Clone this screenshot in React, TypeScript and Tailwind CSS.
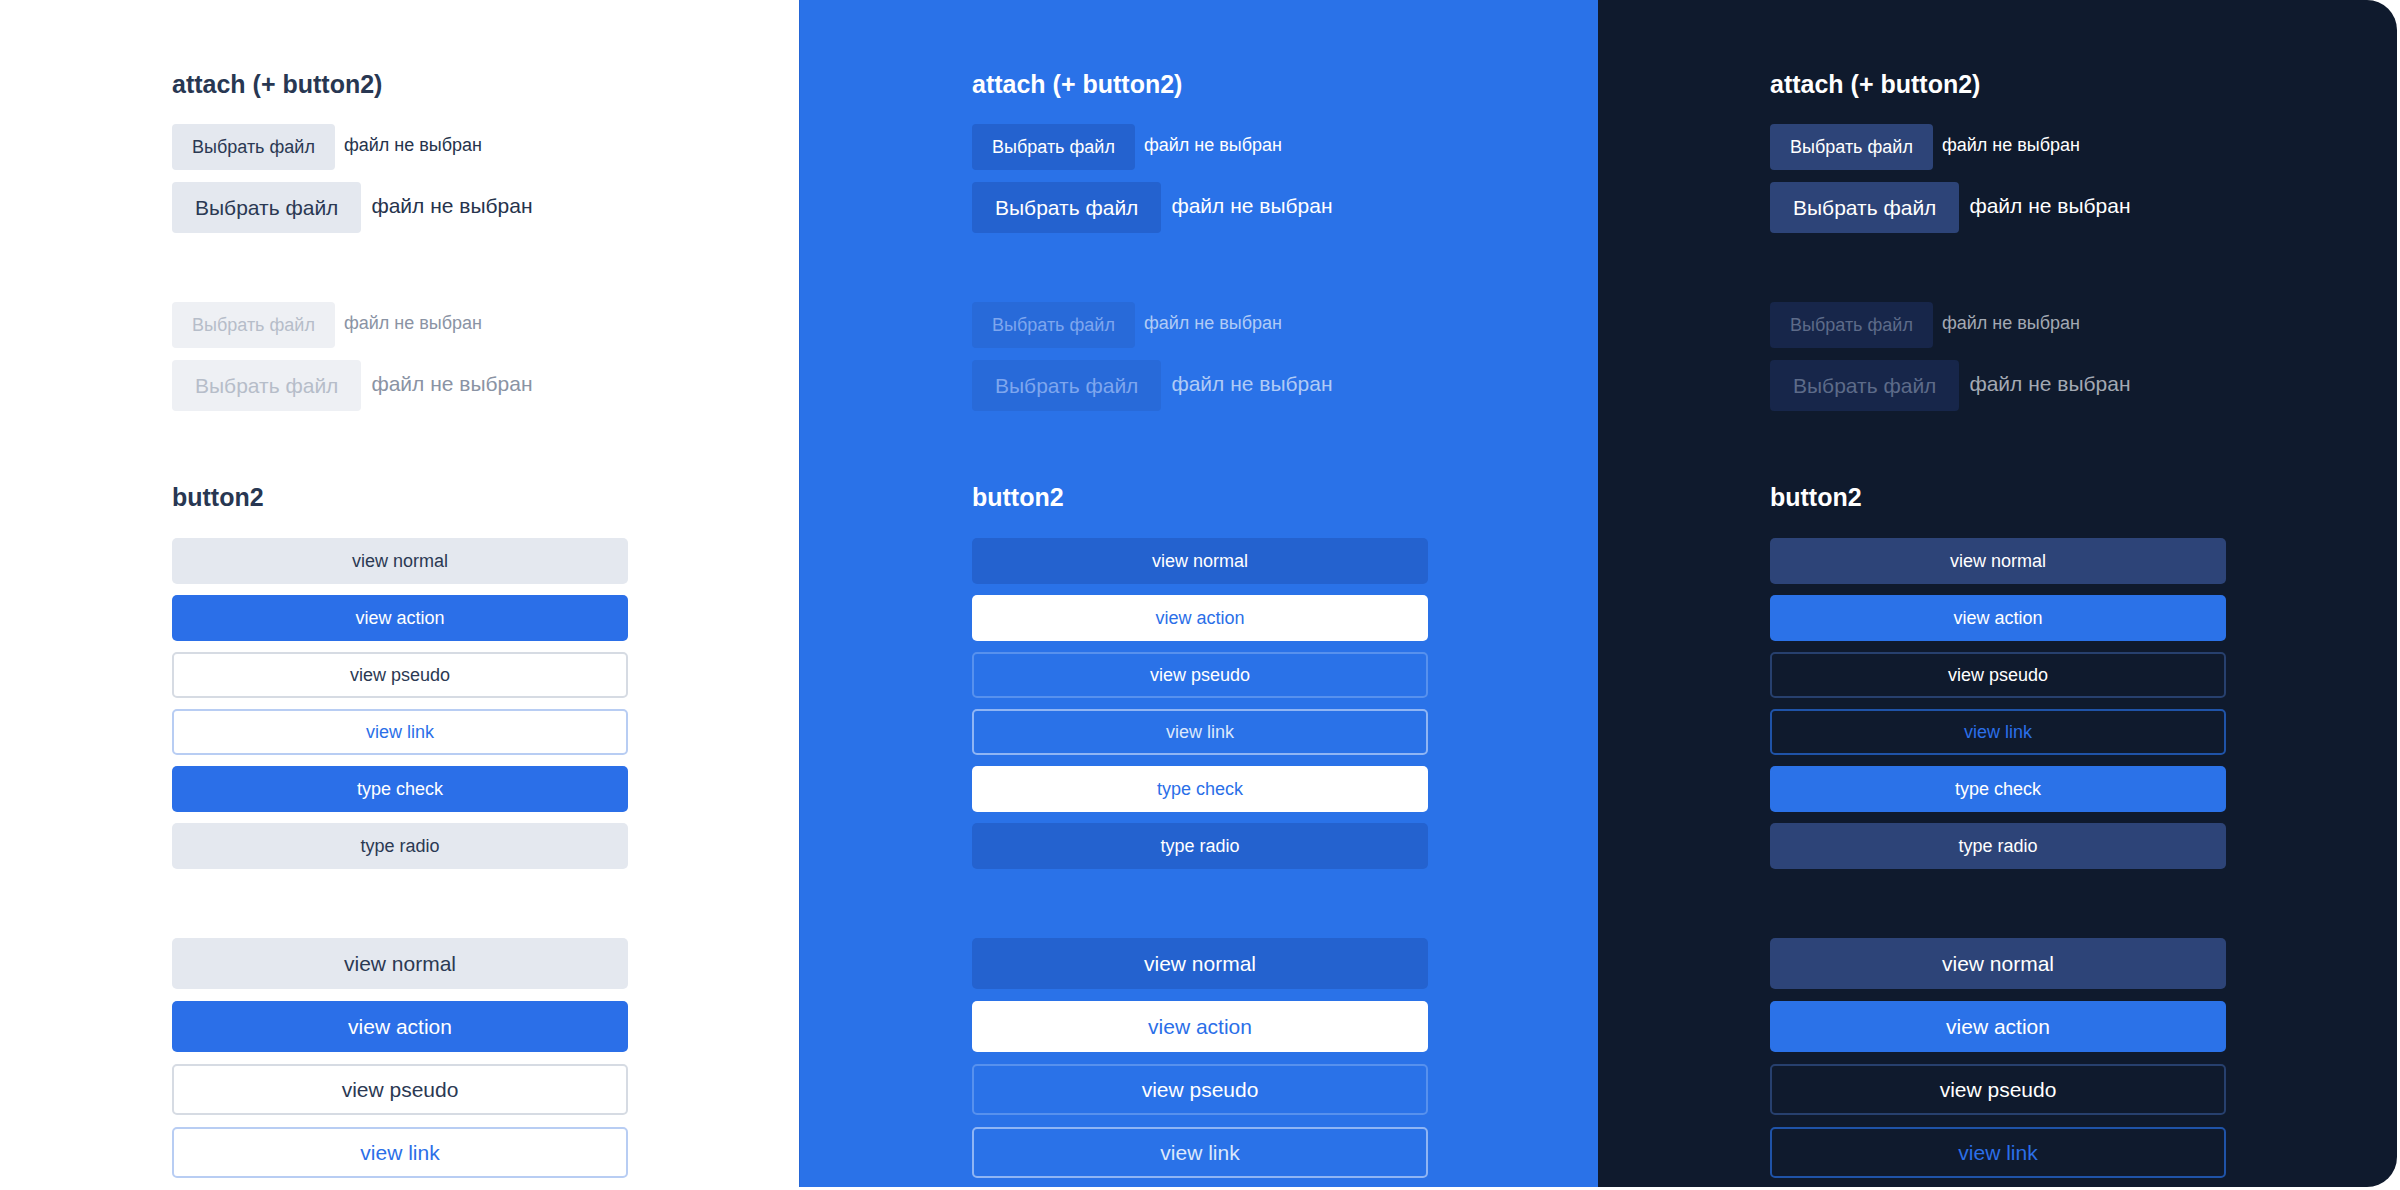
import React from "react";

type Theme = {
  panel: string;
  heading: string;
  fileBtn: string;
  label: string;
  fileBtnOff: string;
  labelOff: string;
  normal: string;
  action: string;
  pseudo: string;
  link: string;
  check: string;
  radio: string;
};

const themes: Theme[] = [
  {
    panel: "bg-white",
    heading: "text-[#283752]",
    fileBtn: "bg-[#e4e8ef] text-[#2b3953]",
    label: "text-[#26334c]",
    fileBtnOff: "bg-[#eef0f4] text-[#b6bdc9]",
    labelOff: "text-[#8a93a4]",
    normal: "bg-[#e4e8ef] text-[#2b3953]",
    action: "bg-[#2b6fe8] text-white",
    pseudo: "border-2 border-[#d6dbe3] bg-white text-[#2b3953]",
    link: "border-2 border-[#b8cdf3] bg-white text-[#2b6fe8]",
    check: "bg-[#2b6fe8] text-white",
    radio: "bg-[#e4e8ef] text-[#2b3953]",
  },
  {
    panel: "bg-[#2a72e8] border-l border-[#2566d6]",
    heading: "text-white",
    fileBtn: "bg-[#2462cf] text-white",
    label: "text-white",
    fileBtnOff: "bg-[#286ad9] text-[#7ea6ee]",
    labelOff: "text-[#b0cbf6]",
    normal: "bg-[#2462cf] text-white",
    action: "bg-white text-[#2b6fe8]",
    pseudo: "border-2 border-[#5791ee] text-white",
    link: "border-2 border-[#8fb5f4] text-[#dce8fc]",
    check: "bg-white text-[#2b6fe8]",
    radio: "bg-[#2462cf] text-white",
  },
  {
    panel: "bg-[#0f1a2d]",
    heading: "text-white",
    fileBtn: "bg-[#2d4478] text-white",
    label: "text-white",
    fileBtnOff: "bg-[#17264a] text-[#5d6b89]",
    labelOff: "text-[#a3a9b3]",
    normal: "bg-[#2d4478] text-white",
    action: "bg-[#2b72e8] text-white",
    pseudo: "border-2 border-[#27406e] text-white",
    link: "border-2 border-[#1f53a8] text-[#2b6fe8]",
    check: "bg-[#2b72e8] text-white",
    radio: "bg-[#2d4478] text-white",
  },
];

function AttachRow({ t, large, disabled }: { t: Theme; large?: boolean; disabled?: boolean }) {
  const btn = disabled ? t.fileBtnOff : t.fileBtn;
  const label = disabled ? t.labelOff : t.label;
  return (
    <div className={`flex items-center ${large ? "gap-[10px]" : "gap-[9px]"}`}>
      <div
        className={`flex items-center justify-center rounded-[4px] whitespace-nowrap ${btn} ${
          large ? "h-[51px] px-[23px] text-[21px]" : "h-[46px] px-[20px] text-[18px]"
        }`}
      >
        Выбрать файл
      </div>
      <span className={`mb-[4px] whitespace-nowrap ${label} ${large ? "text-[21px]" : "text-[18px]"}`}>
        файл не выбран
      </span>
    </div>
  );
}

function Btn({ cls, large, children }: { cls: string; large?: boolean; children: React.ReactNode }) {
  return (
    <div
      className={`flex w-[456px] shrink-0 items-center justify-center rounded-[5px] ${cls} ${
        large ? "h-[51px] text-[21px]" : "h-[46px] text-[18px]"
      }`}
    >
      {children}
    </div>
  );
}

function Column({ t }: { t: Theme }) {
  return (
    <div className={`flex h-full w-[800px] flex-col pl-[172px] pt-[70px] ${t.panel}`}>
      <h2 className={`text-[25px] font-bold leading-[29px] ${t.heading}`}>attach (+ button2)</h2>

      <div className="mt-[25px] flex flex-col gap-[12px]">
        <AttachRow t={t} />
        <AttachRow t={t} large />
      </div>

      <div className="mt-[69px] flex flex-col gap-[12px]">
        <AttachRow t={t} disabled />
        <AttachRow t={t} large disabled />
      </div>

      <h2 className={`mt-[72px] text-[25px] font-bold leading-[29px] ${t.heading}`}>button2</h2>

      <div className="mt-[26px] flex flex-col gap-[11px]">
        <Btn cls={t.normal}>view normal</Btn>
        <Btn cls={t.action}>view action</Btn>
        <Btn cls={t.pseudo}>view pseudo</Btn>
        <Btn cls={t.link}>view link</Btn>
        <Btn cls={t.check}>type check</Btn>
        <Btn cls={t.radio}>type radio</Btn>
      </div>

      <div className="mt-[69px] flex flex-col gap-[12px]">
        <Btn cls={t.normal} large>view normal</Btn>
        <Btn cls={t.action} large>view action</Btn>
        <Btn cls={t.pseudo} large>view pseudo</Btn>
        <Btn cls={t.link} large>view link</Btn>
        <Btn cls={t.check} large>type check</Btn>
      </div>
    </div>
  );
}

export default function App() {
  return (
    <div className="h-[1190px] w-[2400px] bg-white" style={{ fontFamily: '"Liberation Sans", Arial, sans-serif' }}>
      <div className="flex h-[1187px] w-[2397px] overflow-hidden rounded-[30px]">
        {themes.map((t, i) => (
          <Column key={i} t={t} />
        ))}
      </div>
    </div>
  );
}
